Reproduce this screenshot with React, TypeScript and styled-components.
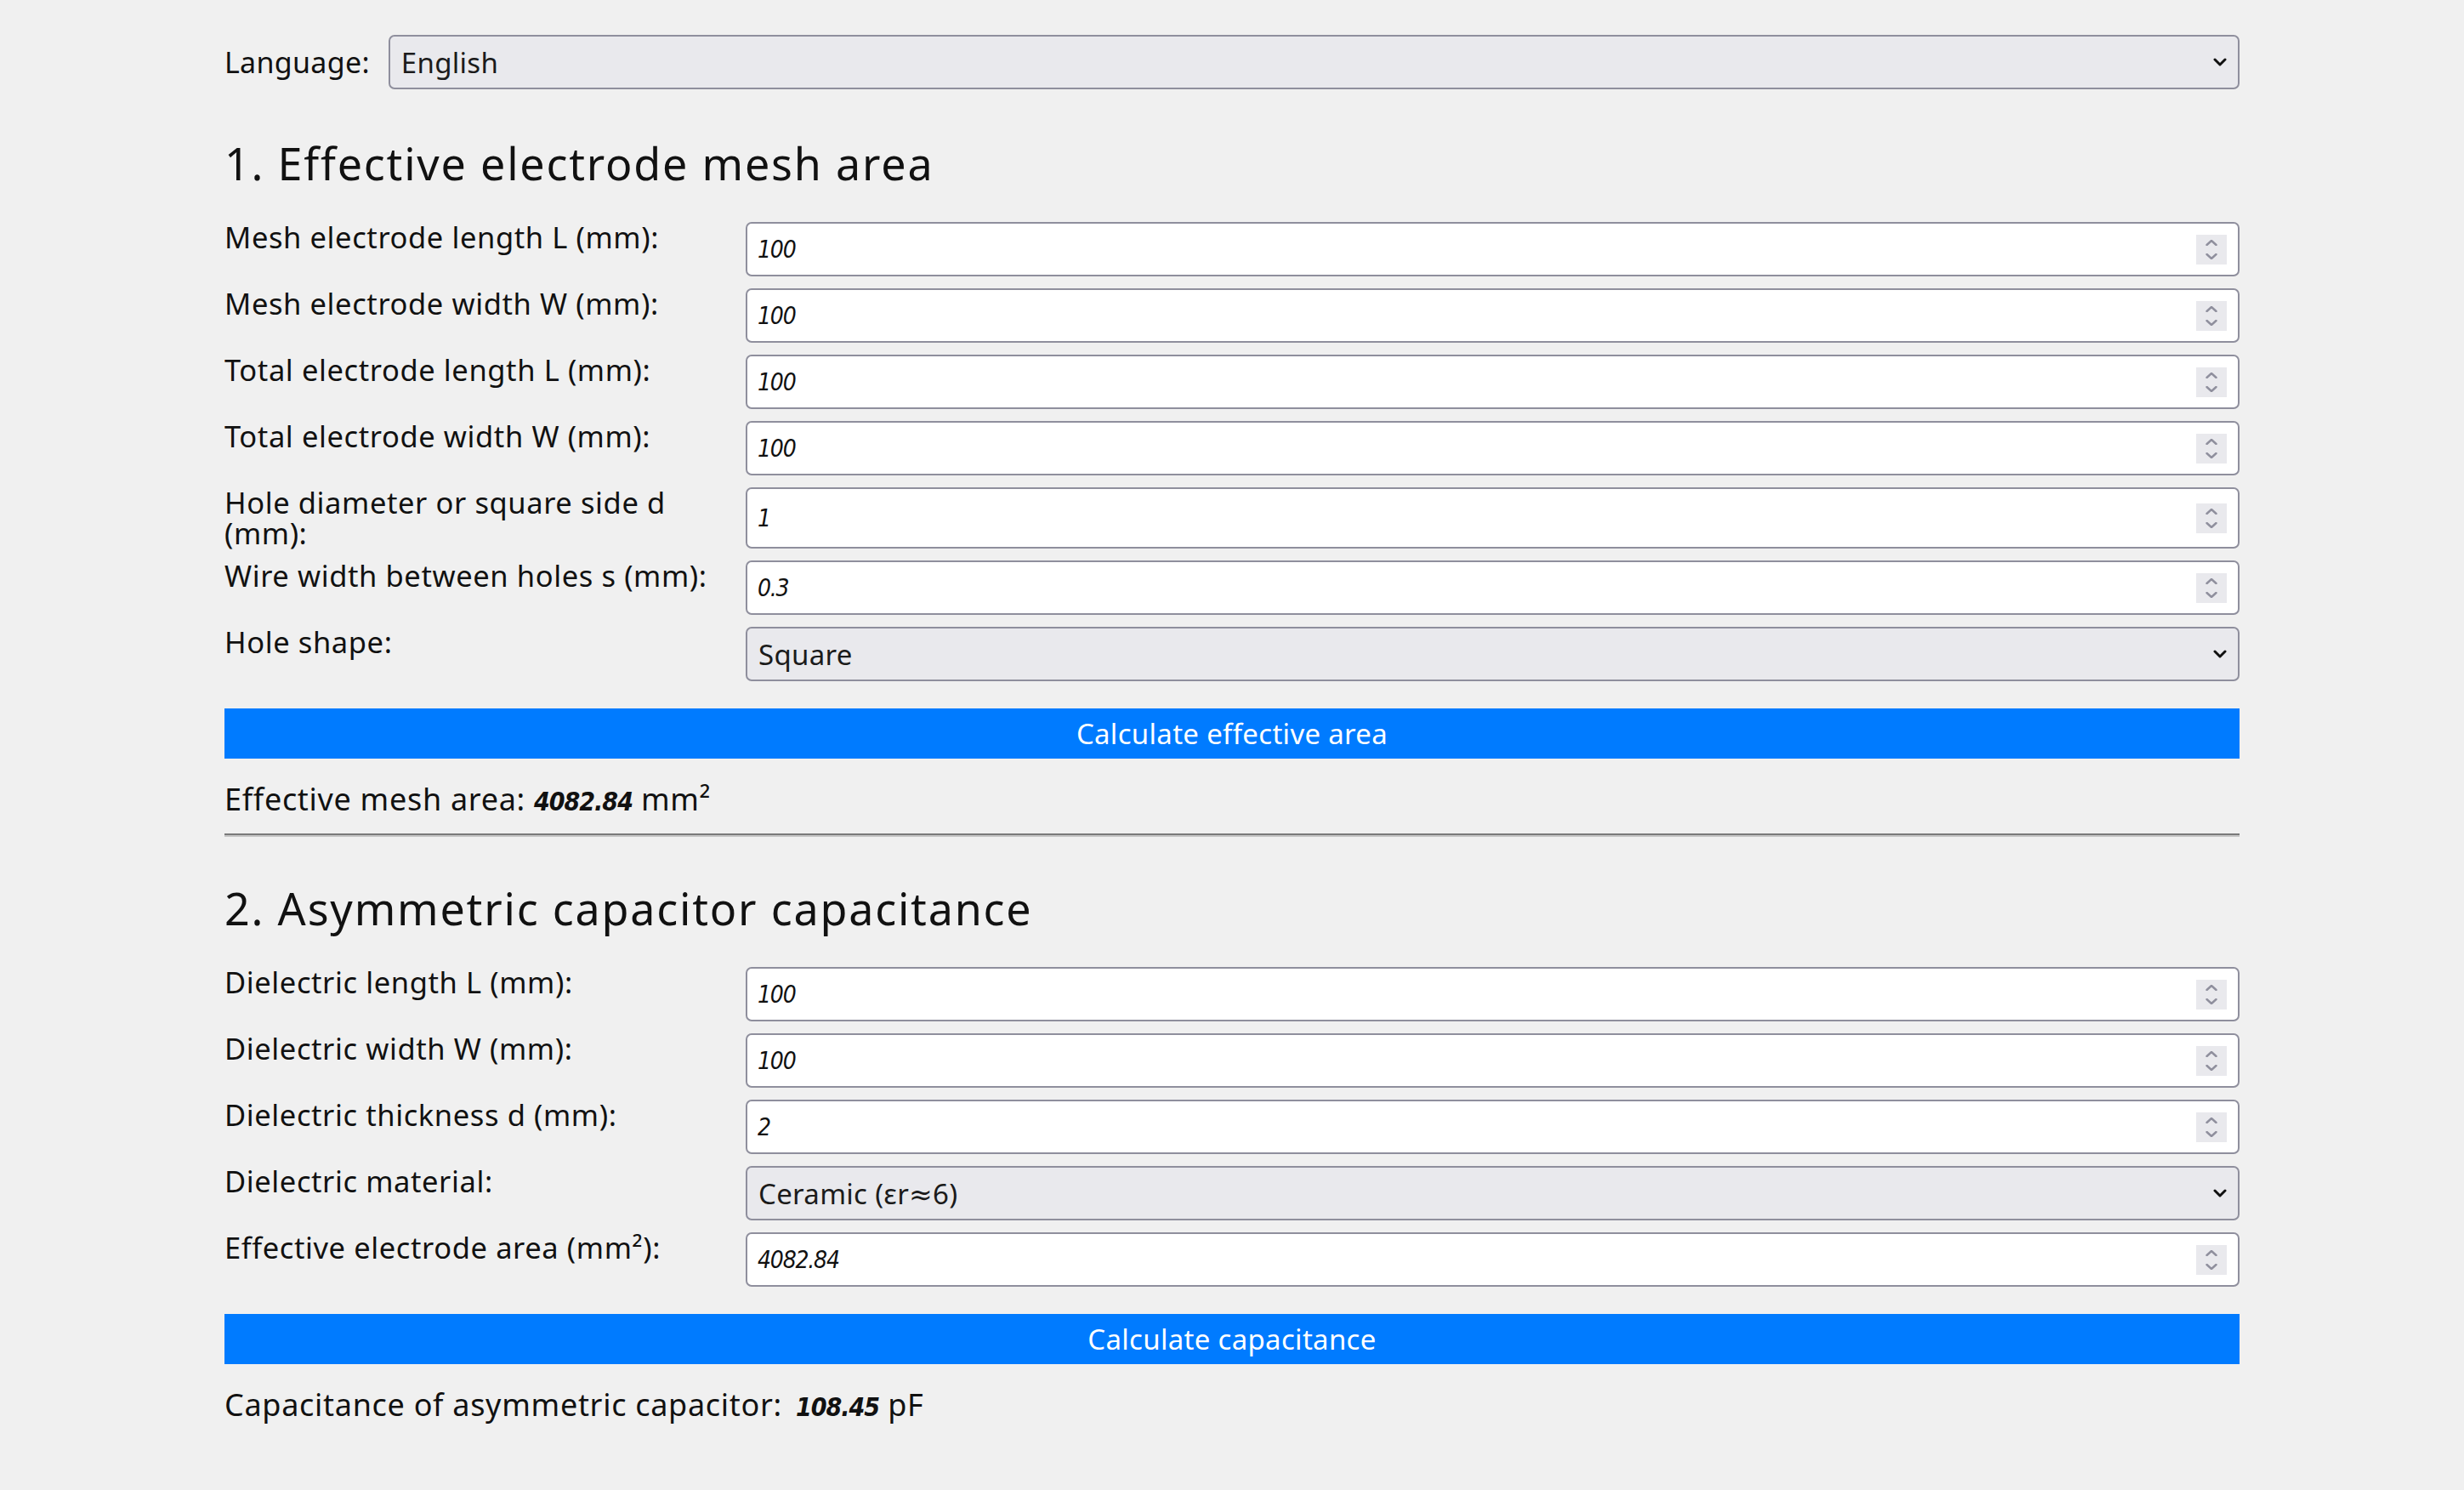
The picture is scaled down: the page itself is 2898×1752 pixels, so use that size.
import React from "react";
import styled, { createGlobalStyle } from "styled-components";

const GlobalStyle = createGlobalStyle`
  html, body {
    margin: 0;
    padding: 0;
    background: #f0f0f0;
    color: #111;
    font-family: "Noto Sans", "DejaVu Sans", sans-serif;
  }
  * { box-sizing: border-box; }
`;

const DIGIT_FONT = `"Liberation Sans Narrow", "DejaVu Sans Condensed", "DejaVu Sans", sans-serif`;

const Page = styled.main`
  width: 2370px;
  margin: 0 auto;
  padding: 41px 0 80px;
`;

const LangRow = styled.div`
  display: flex;
  align-items: center;
  gap: 22px;
`;

const LangLabel = styled.label`
  font-size: 34px;
  line-height: 36px;
  letter-spacing: 0.3px;
`;

const SelectBox = styled.div`
  flex: 1;
  height: 64px;
  display: flex;
  align-items: center;
  padding: 0 13px 0 13px;
  background: #e9e9ed;
  border: 2px solid #8f8f9d;
  border-radius: 7px;
`;

const NativeSelect = styled.select`
  flex: 1;
  height: 100%;
  appearance: none;
  -webkit-appearance: none;
  border: none;
  outline: none;
  background: transparent;
  padding: 0;
  font-family: inherit;
  font-size: 33px;
  letter-spacing: 0.3px;
  color: #1b1b1b;
`;

const Heading = styled.h2<{ $top: number }>`
  margin: ${(p) => p.$top}px 0 39px;
  font-size: 52px;
  line-height: 60px;
  font-weight: 400;
  letter-spacing: 1.8px;
  color: #111;
`;

const Row = styled.div`
  display: flex;
  align-items: stretch;
  margin-bottom: 14px;
  &:last-of-type {
    margin-bottom: 0;
  }
`;

const FieldLabel = styled.label`
  flex: 0 0 593px;
  margin-right: 20px;
  font-size: 34.5px;
  line-height: 36px;
  letter-spacing: 0.6px;
  color: #111;
`;

const Field = styled.div`
  flex: 1;
  min-height: 64px;
  display: flex;
  align-items: center;
  padding: 0 13px 0 12px;
  background: #fff;
  border: 2px solid #8f8f9d;
  border-radius: 7px;
`;

const NumInput = styled.input`
  flex: 1;
  height: 100%;
  min-height: 56px;
  border: none;
  outline: none;
  background: transparent;
  padding: 0;
  font-family: ${DIGIT_FONT};
  font-stretch: condensed;
  font-style: italic;
  font-size: 28px;
  letter-spacing: -1.2px;
  color: #111;
`;

const Spinner = styled.div`
  width: 36px;
  height: 35px;
  background: #e9e9ed;
  display: flex;
  flex-direction: column;
  align-items: center;
  justify-content: center;
  gap: 9px;
`;

const Fields = styled.div``;

const Button = styled.button`
  display: block;
  width: 100%;
  height: 59px;
  margin-top: 32px;
  border: none;
  border-radius: 0;
  background: #007bff;
  color: #fff;
  font-family: inherit;
  font-size: 33px;
  letter-spacing: 0.3px;
  cursor: pointer;
`;

const Result = styled.p`
  margin: 30px 0 0;
  font-size: 36px;
  line-height: 36px;
  letter-spacing: 0.7px;
  color: #111;
`;

const Value = styled.span<{ $gap?: number }>`
  margin-left: ${(p) => p.$gap ?? 0}px;
  font-family: ${DIGIT_FONT};
  font-stretch: condensed;
  font-style: italic;
  font-weight: 700;
  font-size: 30px;
  letter-spacing: -1px;
`;

const Rule = styled.hr`
  margin: 19px 0 0;
  height: 0;
  border: 0;
  border-top: 2px solid #7a7a7a;
  border-bottom: 2px solid #c4c4c4;
`;

const ChevronDown = () => (
  <svg width="16" height="11" viewBox="0 0 16 11" aria-hidden="true">
    <polyline points="2,2 8,8 14,2" fill="none" stroke="#111" strokeWidth="3" strokeLinecap="round" strokeLinejoin="round" />
  </svg>
);

const SpinGlyph = ({ up }: { up?: boolean }) => (
  <svg width="14" height="7" viewBox="0 0 14 7" aria-hidden="true">
    <polyline
      points={up ? "1.5,6 7,1 12.5,6" : "1.5,1 7,6 12.5,1"}
      fill="none"
      stroke="#8f8f9d"
      strokeWidth="2.4"
      strokeLinecap="round"
      strokeLinejoin="round"
    />
  </svg>
);

const Select = ({ value, options }: { value: string; options: string[] }) => (
  <SelectBox>
    <NativeSelect defaultValue={value}>
      {options.map((o) => (
        <option key={o}>{o}</option>
      ))}
    </NativeSelect>
    <ChevronDown />
  </SelectBox>
);

const NumberField = ({ label, value }: { label: string; value: string }) => (
  <Row>
    <FieldLabel>{label}</FieldLabel>
    <Field>
      <NumInput type="text" inputMode="decimal" defaultValue={value} />
      <Spinner>
        <SpinGlyph up />
        <SpinGlyph />
      </Spinner>
    </Field>
  </Row>
);

const SelectField = ({ label, value, options }: { label: string; value: string; options: string[] }) => (
  <Row>
    <FieldLabel>{label}</FieldLabel>
    <Select value={value} options={options} />
  </Row>
);

export default function App() {
  return (
    <>
      <GlobalStyle />
      <Page>
        <LangRow>
          <LangLabel>Language:</LangLabel>
          <Select value="English" options={["English", "Русский", "中文"]} />
        </LangRow>

        <Heading $top={57}>1. Effective electrode mesh area</Heading>
        <Fields>
          <NumberField label="Mesh electrode length L (mm):" value="100" />
          <NumberField label="Mesh electrode width W (mm):" value="100" />
          <NumberField label="Total electrode length L (mm):" value="100" />
          <NumberField label="Total electrode width W (mm):" value="100" />
          <NumberField label="Hole diameter or square side d (mm):" value="1" />
          <NumberField label="Wire width between holes s (mm):" value="0.3" />
          <SelectField label="Hole shape:" value="Square" options={["Square", "Round"]} />
        </Fields>
        <Button>Calculate effective area</Button>
        <Result>
          Effective mesh area: <Value>4082.84</Value> mm²
        </Result>
        <Rule />

        <Heading $top={54}>2. Asymmetric capacitor capacitance</Heading>
        <Fields>
          <NumberField label="Dielectric length L (mm):" value="100" />
          <NumberField label="Dielectric width W (mm):" value="100" />
          <NumberField label="Dielectric thickness d (mm):" value="2" />
          <SelectField
            label="Dielectric material:"
            value="Ceramic (εr≈6)"
            options={["Ceramic (εr≈6)", "Glass (εr≈5)", "Air (εr≈1)"]}
          />
          <NumberField label="Effective electrode area (mm²):" value="4082.84" />
        </Fields>
        <Button>Calculate capacitance</Button>
        <Result>
          Capacitance of asymmetric capacitor: <Value $gap={6}>108.45</Value> pF
        </Result>
      </Page>
    </>
  );
}
